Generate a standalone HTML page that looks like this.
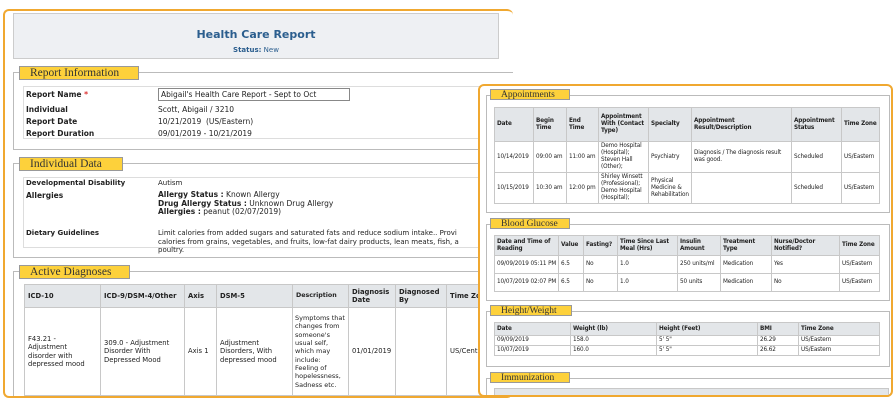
<!DOCTYPE html>
<html><head><style>
*{margin:0;padding:0;box-sizing:border-box}
body{width:894px;height:401px;background:#fff;position:relative;overflow:hidden;font-family:"DejaVu Sans",Verdana,sans-serif;font-size:7.5px;color:#222}
.abs{position:absolute}
.panel{position:absolute;border:2px solid #f0a830;border-radius:6px;background:#fff;overflow:hidden}
.fs{position:absolute;border:1px solid #bbb}
.lg{position:absolute;background:#fdd13b;border:1px solid #999;font-family:"Liberation Serif",serif;color:#333;padding-left:10px;line-height:12px}
table{border-collapse:collapse;position:absolute;table-layout:fixed}
td,th{border:1px solid #c8c8c8;padding:1px 3px;vertical-align:middle;text-align:left;overflow:hidden}
th{background:#e3e6e9;font-weight:bold}
.b{font-weight:bold}
.small td,.small th{font-size:5.7px;line-height:7px;padding:1px 1px 1px 2px;letter-spacing:-0.1px}
.nw{white-space:nowrap}
</style></head><body>
<div class="panel" style="left:3px;top:9px;width:510px;height:389px;border-right:none">
 <div class="abs" style="left:8px;top:2px;width:486px;height:46px;background:#eef0f3;border:1px solid #ccc"></div>
 <div class="abs b" style="left:8px;top:17px;width:486px;text-align:center;font-size:11px;color:#2b5e8e">Health Care Report</div>
 <div class="abs" style="left:8px;top:35px;width:486px;text-align:center;font-size:7px;color:#2b5e8e"><b>Status:</b> New</div>

 <div class="fs" style="left:8px;top:61px;width:510px;height:78px"></div>
 <div class="lg" style="left:14px;top:55px;width:120px;height:14px;font-size:11.5px">Report Information</div>
 <div class="abs" style="left:18px;top:75px;width:500px;height:53px;border:1px solid #ddd"></div>
 <div class="abs b" style="left:21px;top:79px">Report Name <span style="color:#d33">*</span></div>
 <div class="abs" style="left:153px;top:77px;width:192px;height:13px;border:1px solid #888;padding:1px 2px">Abigail's Health Care Report - Sept to Oct</div>
 <div class="abs b" style="left:21px;top:94px">Individual</div><div class="abs" style="left:153px;top:94px">Scott, Abigail / 3210</div>
 <div class="abs b" style="left:21px;top:106px">Report Date</div><div class="abs" style="left:153px;top:106px">10/21/2019&nbsp; (US/Eastern)</div>
 <div class="abs b" style="left:21px;top:118px">Report Duration</div><div class="abs" style="left:153px;top:118px">09/01/2019 - 10/21/2019</div>

 <div class="fs" style="left:8px;top:152px;width:510px;height:95px"></div>
 <div class="lg" style="left:14px;top:146px;width:104px;height:14px;font-size:11.5px">Individual Data</div>
 <div class="abs" style="left:18px;top:166px;width:500px;height:71px;border:1px solid #ddd"></div>
 <div class="abs b" style="left:21px;top:168px;font-size:7px">Developmental Disability</div><div class="abs" style="left:153px;top:168px;font-size:7px">Autism</div>
 <div class="abs b" style="left:21px;top:180px">Allergies</div>
 <div class="abs" style="left:153px;top:180px;line-height:8.5px"><b>Allergy Status :</b> Known Allergy<br><b>Drug Allergy Status :</b> Unknown Drug Allergy<br><b>Allergies :</b> peanut (02/07/2019)</div>
 <div class="abs b" style="left:21px;top:218px;font-size:7px">Dietary Guidelines</div>
 <div class="abs" style="left:153px;top:218px;font-size:7px;line-height:8.5px;white-space:nowrap">Limit calories from added sugars and saturated fats and reduce sodium intake.. Provi<br>calories from grains, vegetables, and fruits, low-fat dairy products, lean meats, fish, a<br>poultry.</div>

 <div class="fs" style="left:8px;top:260px;width:510px;height:140px"></div>
 <div class="lg" style="left:14px;top:254px;width:111px;height:14px;font-size:11.5px">Active Diagnoses</div>
 <table style="left:19px;top:273px;width:480px;font-size:6.8px;line-height:8.3px">
  <colgroup><col style="width:76px"><col style="width:84px"><col style="width:32px"><col style="width:76px"><col style="width:56px"><col style="width:47px"><col style="width:51px"><col style="width:58px"></colgroup>
  <tr style="height:23px"><th>ICD-10</th><th>ICD-9/DSM-4/Other</th><th>Axis</th><th>DSM-5</th><th style="font-size:6.3px">Description</th><th>Diagnosis Date</th><th>Diagnosed By</th><th>Time Zone</th></tr>
  <tr style="height:88px"><td>F43.21 - Adjustment disorder with depressed mood</td><td>309.0 - Adjustment Disorder With Depressed Mood</td><td>Axis 1</td><td>Adjustment Disorders, With depressed mood</td><td style="padding:1px 2px;font-size:6.5px">Symptoms that changes from someone's usual self, which may include: Feeling of hopelessness, Sadness etc.</td><td class="nw">01/01/2019</td><td></td><td class="nw">US/Cent</td></tr>
 </table>
</div>

<div class="panel" style="left:478px;top:84px;width:415px;height:313px">
 <div class="fs" style="left:6px;top:9px;width:404px;height:118px"></div>
 <div class="lg" style="left:10px;top:3px;width:80px;height:11px;font-size:9.5px;line-height:10px">Appointments</div>
 <table class="small" style="left:14px;top:21px;width:385px">
  <colgroup><col style="width:39px"><col style="width:33px"><col style="width:32px"><col style="width:50px"><col style="width:43px"><col style="width:100px"><col style="width:50px"><col style="width:38px"></colgroup>
  <tr style="height:34px"><th>Date</th><th>Begin Time</th><th>End Time</th><th>Appointment With (Contact Type)</th><th>Specialty</th><th>Appointment Result/Description</th><th>Appointment Status</th><th>Time Zone</th></tr>
  <tr style="height:31px"><td class="nw">10/14/2019</td><td class="nw">09:00 am</td><td class="nw">11:00 am</td><td>Demo Hospital (Hospital); Steven Hall (Other);</td><td>Psychiatry</td><td>Diagnosis / The diagnosis result was good.</td><td>Scheduled</td><td class="nw">US/Eastern</td></tr>
  <tr style="height:31px"><td class="nw">10/15/2019</td><td class="nw">10:30 am</td><td class="nw">12:00 pm</td><td>Shirley Winsett (Professional); Demo Hospital (Hospital);</td><td>Physical Medicine &amp; Rehabilitation</td><td></td><td>Scheduled</td><td class="nw">US/Eastern</td></tr>
 </table>

 <div class="fs" style="left:6px;top:138px;width:404px;height:77px"></div>
 <div class="lg" style="left:10px;top:132px;width:80px;height:11px;font-size:9.5px;line-height:10px">Blood Glucose</div>
 <table class="small" style="left:14px;top:149px;width:385px">
  <colgroup><col style="width:64px"><col style="width:25px"><col style="width:34px"><col style="width:60px"><col style="width:43px"><col style="width:51px"><col style="width:68px"><col style="width:40px"></colgroup>
  <tr style="height:20px"><th>Date and Time of Reading</th><th>Value</th><th>Fasting?</th><th>Time Since Last Meal (Hrs)</th><th>Insulin Amount</th><th>Treatment Type</th><th>Nurse/Doctor Notified?</th><th>Time Zone</th></tr>
  <tr style="height:18px"><td>09/09/2019 05:11 PM</td><td>6.5</td><td>No</td><td>1.0</td><td class="nw">250 units/ml</td><td>Medication</td><td>Yes</td><td class="nw">US/Eastern</td></tr>
  <tr style="height:18px"><td>10/07/2019 02:07 PM</td><td>6.5</td><td>No</td><td>1.0</td><td>50 units</td><td>Medication</td><td>No</td><td class="nw">US/Eastern</td></tr>
 </table>

 <div class="fs" style="left:6px;top:225px;width:404px;height:56px"></div>
 <div class="lg" style="left:10px;top:219px;width:82px;height:11px;font-size:9.5px;line-height:10px">Height/Weight</div>
 <table class="small" style="left:14px;top:236px;width:385px">
  <colgroup><col style="width:76px"><col style="width:86px"><col style="width:101px"><col style="width:41px"><col style="width:81px"></colgroup>
  <tr style="height:13px"><th>Date</th><th>Weight (lb)</th><th>Height (Feet)</th><th>BMI</th><th>Time Zone</th></tr>
  <tr style="height:10px"><td>09/09/2019</td><td>158.0</td><td>5' 5"</td><td>26.29</td><td>US/Eastern</td></tr>
  <tr style="height:10px"><td>10/07/2019</td><td>160.0</td><td>5' 5"</td><td>26.62</td><td>US/Eastern</td></tr>
 </table>

 <div class="fs" style="left:6px;top:292px;width:410px;height:30px"></div>
 <div class="lg" style="left:10px;top:286px;width:80px;height:11px;font-size:9.5px;line-height:10px">Immunization</div>
 <div class="abs" style="left:14px;top:302px;width:395px;height:15px;background:#e3e6e9;border:1px solid #c8c8c8"></div>
</div>
</body></html>
